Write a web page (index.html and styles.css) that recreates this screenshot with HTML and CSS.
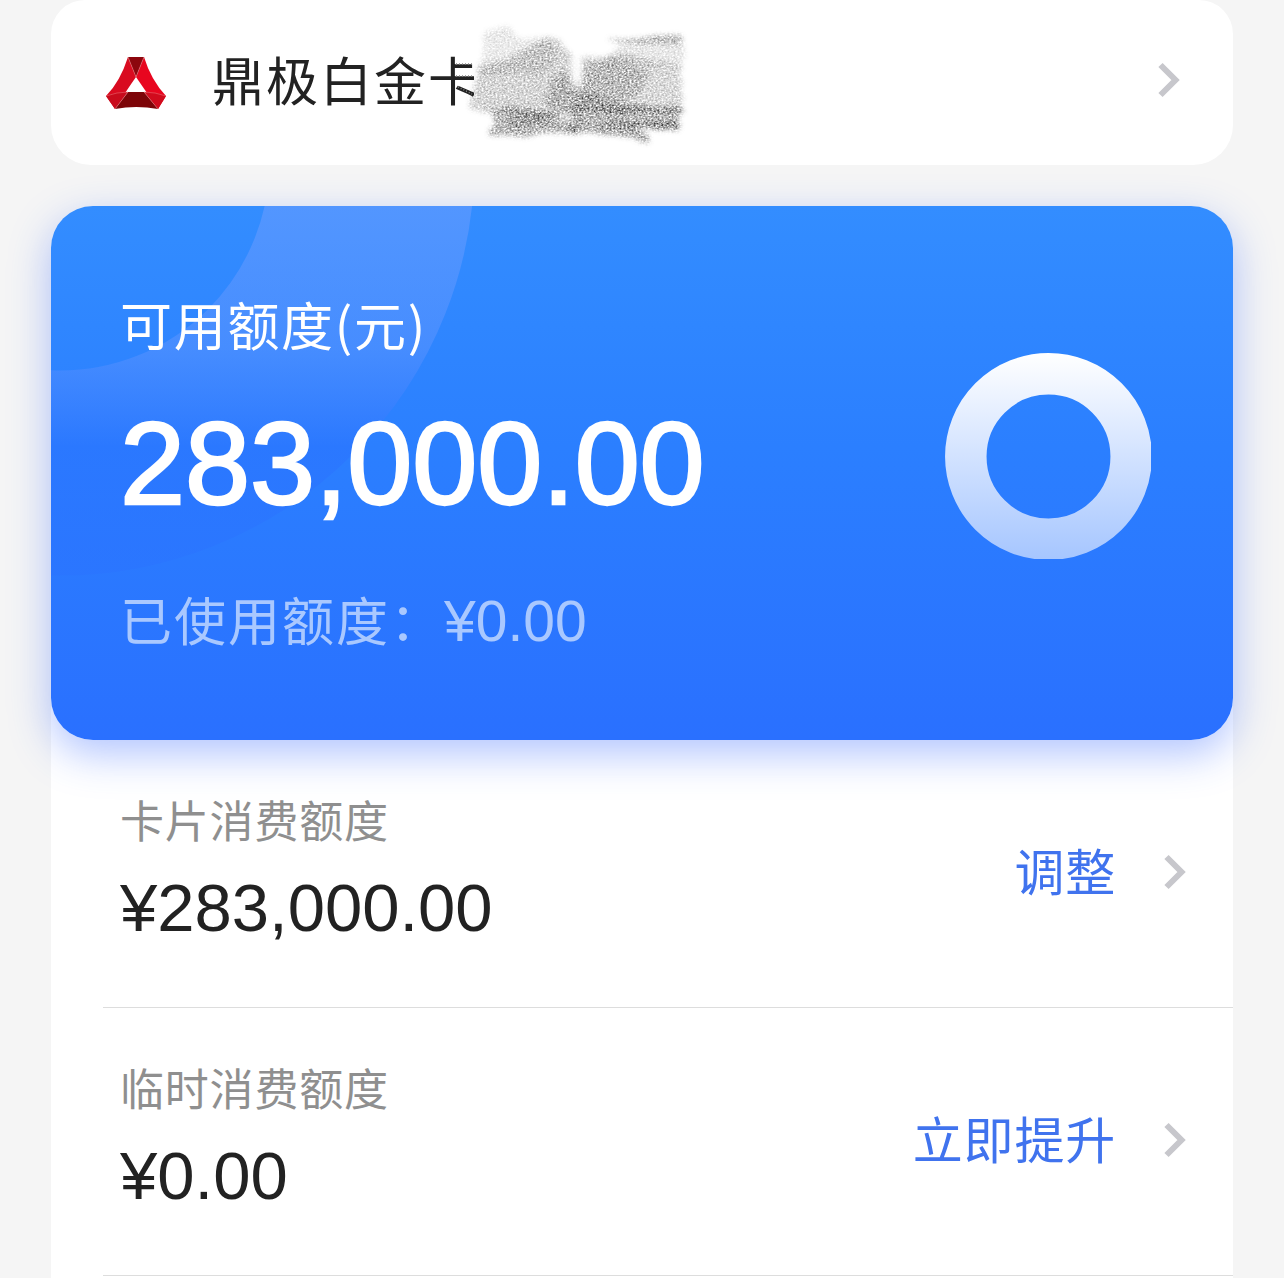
FILE: index.html
```html
<!DOCTYPE html>
<html lang="zh-CN">
<head>
    <meta charset="UTF-8">
    <meta name="viewport" content="width=device-width, initial-scale=1.0">
    <title>额度管理</title>
    <link rel="stylesheet" href="styles.css">
</head>
<body>
    <div class="container">
        <!-- Card selector -->
        <header class="card-header">
            <svg class="logo" viewBox="106 56 61 54" width="61" height="54">
                <path d="M128 57L136 77Q126 91 115 109L106 96Q120 82 128 57Z" fill="#d90b20"/>
                <path d="M144 57Q151 80 166 96L158 109L136 77Z" fill="#e8061f"/>
                <path d="M128 57H144L136 77Z" fill="#8c060d"/>
                <path d="M106 96Q117 92 128 92L115 109Z" fill="#c90b1c"/>
                <path d="M166 96Q155 92 144 92L158 109Z" fill="#d10b1d"/>
                <path d="M128 92H144L158 109Q136 105 115 109Z" fill="#7d0508"/>
                <path d="M136 78L144 92H128Z" fill="#fff"/>
                <path d="M128 57L136 77L144 57M106 96Q117 92 128 92L115 109M166 96Q155 92 144 92L158 109" fill="none" stroke="#ef7a80" stroke-width=".5"/>
            </svg>
            <span class="card-name">鼎极白金卡</span>
            <svg class="arrow" viewBox="0 0 22 36" width="22" height="36"><path d="M2.5 3L17.5 18L2.5 33"/></svg>

            <!-- Pencil scribble hiding the card number -->
            <svg class="scribble" viewBox="450 15 250 140" width="250" height="140">
                <defs>
                    <filter id="pencil" x="450" y="15" width="250" height="140" filterUnits="userSpaceOnUse" color-interpolation-filters="sRGB">
                        <feTurbulence type="fractalNoise" baseFrequency="0.03 0.12" numOctaves="2" seed="8" result="wave"/>
                        <feDisplacementMap in="SourceGraphic" in2="wave" scale="10" xChannelSelector="R" yChannelSelector="G"/>
                        <feGaussianBlur stdDeviation="2.4" result="soft"/>
                        <feTurbulence type="fractalNoise" baseFrequency="0.5 0.6" numOctaves="3" seed="4"/>
                        <feColorMatrix values="0 0 0 0 0  0 0 0 0 0  0 0 0 0 0  1 0 0 0 0" result="grain"/>
                        <feComposite in="soft" in2="grain" operator="arithmetic" k1="3.4" k2="-.8" k3="0" k4="0" result="mask"/>
                        <feFlood flood-color="#333"/>
                        <feComposite in2="mask" operator="in"/>
                    </filter>
                </defs>
                <path d="M474 50H690V130H474Z" fill="#fff"/>
                <path d="M456 64H472M456 76H473M458 87L472 94" stroke="#888" stroke-width="1.5" stroke-dasharray="1 2"/>
                <g filter="url(#pencil)">
                    <path d="M485 31L508 27L522 38L548 36L560 55L540 75L480 75Z" opacity=".11"/>
                    <path d="M478 68L505 60L550 36L562 43L574 62L578 112L540 118L470 108Z" opacity=".22"/>
                    <path d="M553 76L566 70L577 88L592 100L572 116L545 104Z" opacity=".22"/>
                    <path d="M490 108L535 110L580 115L578 133L488 138L497 125Z" opacity=".36"/>
                    <path d="M510 114L556 112L552 124L508 128Z" opacity=".16"/>
                    <path d="M580 58L630 56L682 64L683 108L678 112L600 110L578 96Z" opacity=".2"/>
                    <path d="M584 62L612 60L650 70L640 94L618 104L584 100Z" opacity=".2"/>
                    <path d="M574 92L600 98L630 108L684 107L684 111L580 112Z" opacity=".24"/>
                    <path d="M570 105L682 108L676 120L680 128L580 127Z" opacity=".36"/>
                    <path d="M600 122L680 122L678 128L604 126Z" opacity=".4"/>
                    <path d="M568 127L640 127L648 142L610 135L570 131Z" opacity=".42"/>
                    <path d="M604 38L682 36L681 44L620 43Z" opacity=".34"/>
                    <path d="M620 44H684V66H600Z" opacity=".12"/>
                </g>
                <g class="smudge">
                    <ellipse cx="576" cy="70" rx="6" ry="14"/>
                    <ellipse cx="566" cy="117" rx="8" ry="3"/>
                </g>
            </svg>
        </header>

        <!-- Available limit -->
        <section class="limit-card">
            <svg class="limit-bg" viewBox="0 0 1182 534" width="1182" height="534">
                <defs>
                    <linearGradient id="arcFill" gradientUnits="userSpaceOnUse" x1="0" y1="0" x2="0" y2="370">
                        <stop offset="0" stop-color="#86a5ff" stop-opacity=".38"/>
                        <stop offset=".38" stop-color="#7fa0ff" stop-opacity=".3"/>
                        <stop offset=".65" stop-color="#2a6bff" stop-opacity=".35"/>
                        <stop offset="1" stop-color="#2a6bff" stop-opacity=".22"/>
                    </linearGradient>
                </defs>
                <circle cx="9" cy="-45" r="312" fill="none" stroke="url(#arcFill)" stroke-width="205"/>
            </svg>
            <div class="limit-info">
                <p class="limit-label">可用额度(元)</p>
                <p class="limit-amount">283,000.00</p>
                <p class="limit-used">已使用额度：<span class="used-amount">¥0.00</span></p>
            </div>
            <svg class="limit-ring" viewBox="0 0 206 206" width="206" height="206">
                <defs>
                    <linearGradient id="ring" gradientUnits="userSpaceOnUse" x1="0" y1="0" x2="0" y2="206">
                        <stop offset="0" stop-color="#fff"/>
                        <stop offset="1" stop-color="#a6c6ff"/>
                    </linearGradient>
                </defs>
                <circle cx="103.5" cy="103.5" r="82.7" fill="none" stroke="url(#ring)" stroke-width="41.5"/>
            </svg>
        </section>

        <!-- Limit list -->
        <ul class="limit-list">
            <li class="limit-item">
                <div>
                    <p class="item-label">卡片消费额度</p>
                    <p class="item-amount">¥283,000.00</p>
                </div>
                <a class="item-link" href="#"><span>调整</span>
                    <svg class="arrow" viewBox="0 0 22 36" width="22" height="36"><path d="M2.5 3L17.5 18L2.5 33"/></svg>
                </a>
            </li>
            <li class="limit-item">
                <div>
                    <p class="item-label">临时消费额度</p>
                    <p class="item-amount">¥0.00</p>
                </div>
                <a class="item-link" href="#"><span>立即提升</span>
                    <svg class="arrow" viewBox="0 0 22 36" width="22" height="36"><path d="M2.5 3L17.5 18L2.5 33"/></svg>
                </a>
            </li>
        </ul>
    </div>
</body>
</html>
```
FILE: styles.css
```css
* {
    box-sizing: border-box;
}
body {
    margin: 0;
    height: 1278px;
    overflow: hidden;
    background-color: #f5f5f5;
    color: #222;
    font-family: "Liberation Sans", Arial, "Noto Sans CJK SC", sans-serif;
}
p, ul {
    margin: 0;
    padding: 0;
}
.container {
    width: 1182px;
    margin: 0 auto;
}
.card-header {
    position: relative;
    display: flex;
    align-items: center;
    height: 165px;
    padding: 0 53px 0 55px;
    border-radius: 34px 34px 40px 40px;
    background-color: #fff;
}
.card-name {
    flex: 1;
    margin-left: 45px;
    font-size: 52px;
    line-height: 60px;
    letter-spacing: 2px;
}
.arrow {
    flex: none;
    fill: none;
    stroke: #c7c7cc;
    stroke-width: 6;
}
.card-header .arrow {
    margin-bottom: 5px;
}
.scribble {
    position: absolute;
    top: 15px;
    left: 399px;
}
.smudge {
    fill: #fff;
    opacity: .8;
    filter: blur(3px);
}
.limit-card {
    position: relative;
    z-index: 1;
    display: flex;
    justify-content: space-between;
    height: 534px;
    margin-top: 41px;
    padding: 82px 82px 0 69px;
    border-radius: 42px;
    background: linear-gradient(#338dff, #2b7fff 45%, #2a70ff);
    box-shadow: 0 14px 42px rgba(50, 100, 255, .38);
    color: #fff;
}
.limit-bg {
    position: absolute;
    top: 0;
    left: 0;
    border-radius: 42px;
}
.limit-info {
    position: relative;
}
.limit-label {
    font-family: "Noto Sans CJK SC", sans-serif;
    font-size: 52px;
    line-height: 72px;
    letter-spacing: 1.7px;
}
.limit-amount {
    margin-top: 37px;
    font-size: 117px;
    line-height: 134px;
    letter-spacing: -.1px;
    -webkit-text-stroke: 2.5px #fff;
}
.limit-used {
    margin-top: 54px;
    color: #a9c8ff;
    font-size: 52px;
    line-height: 72px;
    letter-spacing: 2px;
}
.used-amount {
    font-size: 57px;
    letter-spacing: 0;
}
.limit-ring {
    position: relative;
    margin-top: 65px;
}
.limit-list {
    height: 580px;
    margin-top: -42px;
    padding-top: 42px;
    background-color: #fff;
    list-style: none;
}
.limit-item {
    display: flex;
    justify-content: space-between;
    height: 268px;
    margin-left: 52px;
    padding: 50px 47px 0 17px;
    border-bottom: 1px solid #ddd;
}
.item-label {
    margin-top: 3px;
    color: #8f8f8f;
    font-size: 44px;
    line-height: 60px;
    letter-spacing: .8px;
}
.item-amount {
    margin-top: 11px;
    font-size: 67px;
    line-height: 88px;
}
.item-link {
    display: flex;
    align-items: center;
    gap: 48px;
    height: 164px;
    color: #4073ee;
    font-size: 50px;
    letter-spacing: .8px;
    text-decoration: none;
}
.item-link span {
    margin-bottom: 6px;
}
```
